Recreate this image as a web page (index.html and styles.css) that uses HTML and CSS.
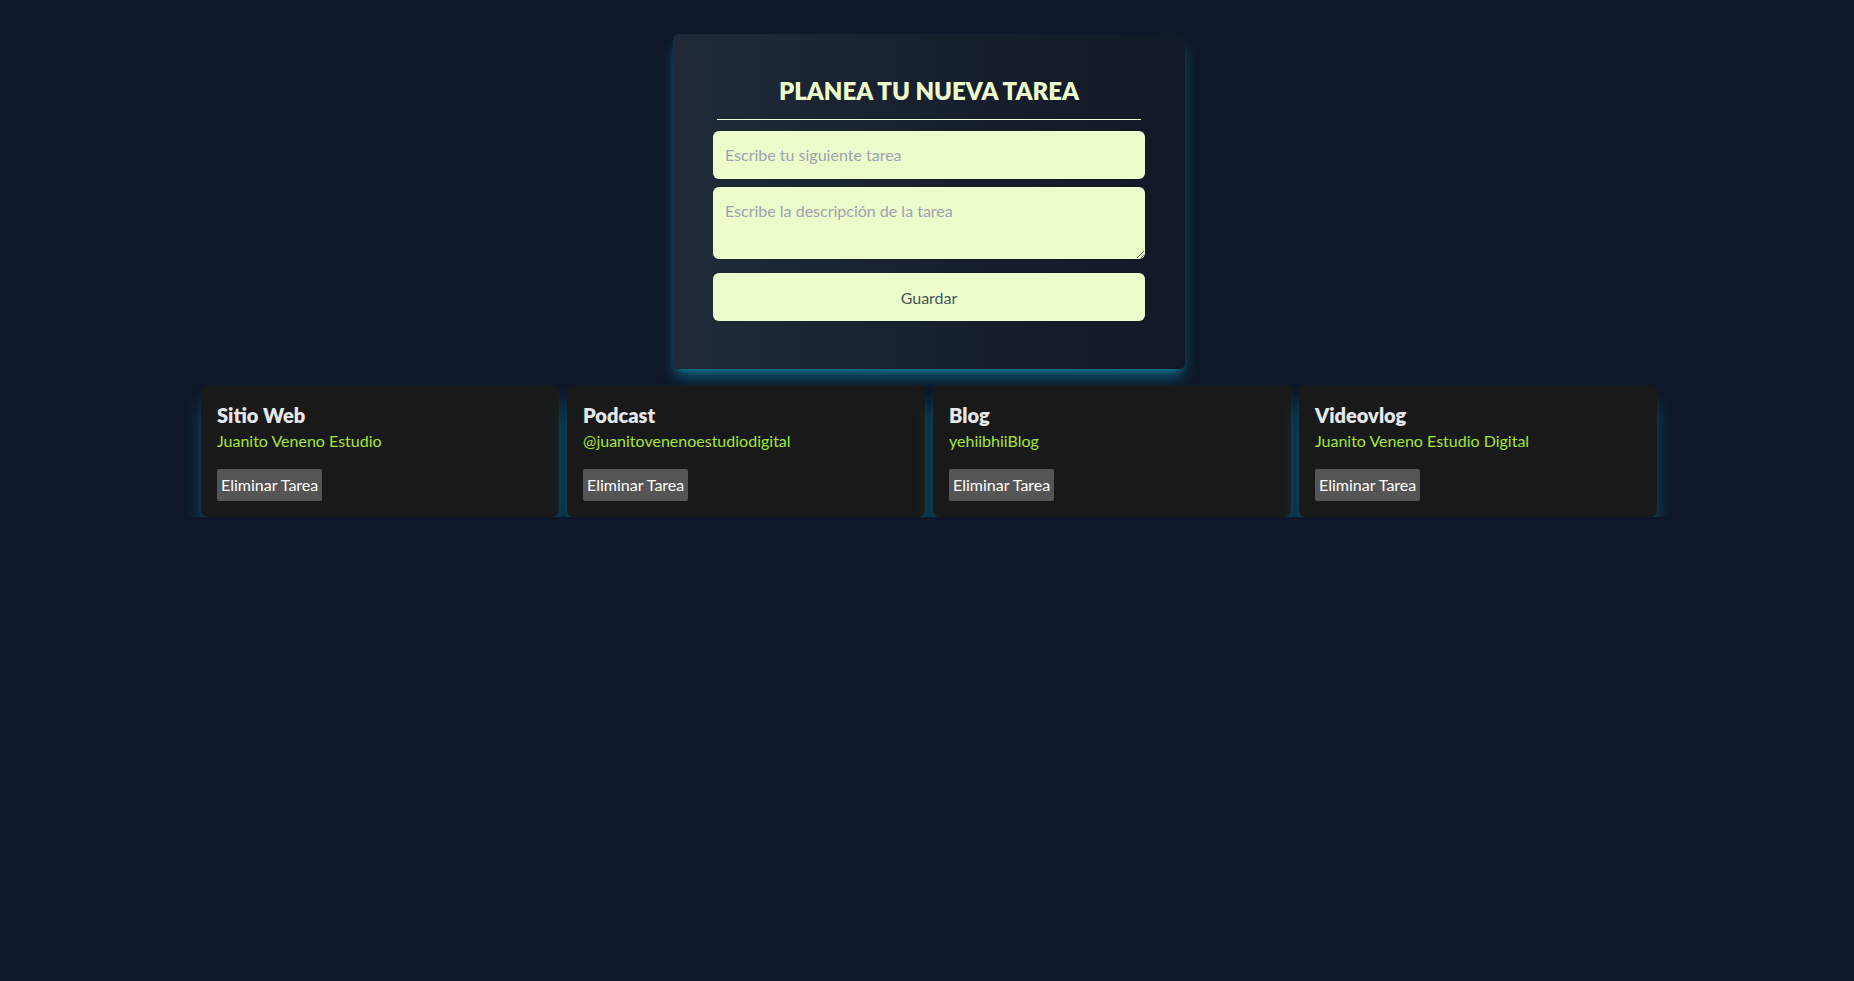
FILE: index.html
```html
<!DOCTYPE html>
<html lang="es">
<head>
<meta charset="utf-8">
<title>Planea tu nueva tarea</title>
<link rel="stylesheet" href="styles.css">
</head>
<body>
<main class="page">
  <form class="planner">
    <h2 class="planner-title">PLANEA TU NUEVA TAREA</h2>
    <input class="field" type="text" placeholder="Escribe tu siguiente tarea">
    <textarea class="field field-area" rows="2" placeholder="Escribe la descripción de la tarea"></textarea>
    <button class="save" type="button">Guardar</button>
  </form>
  <section class="tasks">
    <article class="task">
      <h3 class="task-title">Sitio Web</h3>
      <p class="task-desc">Juanito Veneno Estudio</p>
      <button class="task-delete" type="button">Eliminar Tarea</button>
    </article>
    <article class="task">
      <h3 class="task-title">Podcast</h3>
      <p class="task-desc">@juanitovenenoestudiodigital</p>
      <button class="task-delete" type="button">Eliminar Tarea</button>
    </article>
    <article class="task">
      <h3 class="task-title">Blog</h3>
      <p class="task-desc">yehiibhiiBlog</p>
      <button class="task-delete" type="button">Eliminar Tarea</button>
    </article>
    <article class="task">
      <h3 class="task-title">Videovlog</h3>
      <p class="task-desc">Juanito Veneno Estudio Digital</p>
      <button class="task-delete" type="button">Eliminar Tarea</button>
    </article>
  </section>
</main>
</body>
</html>
```
FILE: styles.css
```css
* { box-sizing: border-box; }
html, body {
  margin: 0;
  padding: 0;
  background: #0f172a;
  min-height: 100%;
}
body {
  font-family: "Segoe UI", "Lato", "Noto Sans", sans-serif;
  font-size: 16px;
  line-height: 24px;
  color: #e5e7eb;
}
.page {
  display: flex;
  flex-direction: column;
  align-items: center;
  padding-top: 34px;
  padding-left: 4px;
}
.planner {
  width: 512px;
  padding: 40px 40px 40px;
  border-radius: 6px;
  background: linear-gradient(to right, #1f2937, #111827);
  box-shadow: 0 10px 15px -3px rgba(6, 182, 212, 0.5), 0 4px 6px -4px rgba(6, 182, 212, 0.5);
  display: flex;
  flex-direction: column;
}
.planner-title {
  margin: 1px 4px 11px;
  padding-bottom: 12px;
  border-bottom: 1px solid #ecfccb;
  text-align: center;
  font-size: 24px;
  line-height: 32px;
  font-weight: 800;
  color: #ecfccb;
}
.field {
  display: block;
  width: 100%;
  margin: 0 0 8px;
  padding: 12px;
  border: 0;
  border-radius: 6px;
  background: #ecfccb;
  font-family: inherit;
  font-size: 16px;
  line-height: 24px;
  color: #374151;
  outline: none;
}
.field::placeholder { color: #9ca3af; }
.field-area {
  height: 72px;
  resize: vertical;
  margin-bottom: 14px;
}
.save {
  width: 100%;
  height: 48px;
  margin: 0 0 8px;
  border: 0;
  border-radius: 6px;
  background: #ecfccb;
  font-family: inherit;
  font-size: 16px;
  color: #4b5563;
}
.tasks {
  margin-top: 16px;
  width: 1456px;
  display: grid;
  grid-template-columns: repeat(4, 1fr);
  gap: 8px;
}
.task {
  padding: 16px;
  border-radius: 6px;
  background: #191919;
  box-shadow: 0 16px 22px -5px rgba(6, 182, 212, 0.5), 0 6px 9px -5px rgba(6, 182, 212, 0.5);
}
.task-title {
  margin: 0;
  font-size: 20px;
  line-height: 28px;
  font-weight: 800;
  color: #e5e7eb;
}
.task-desc {
  margin: 0 0 16px;
  color: #a3e635;
}
.task-delete {
  display: block;
  padding: 4px;
  border: 0;
  border-radius: 2px;
  background: #555555;
  font-family: inherit;
  font-size: 16px;
  line-height: 24px;
  color: #ffffff;
}
```
